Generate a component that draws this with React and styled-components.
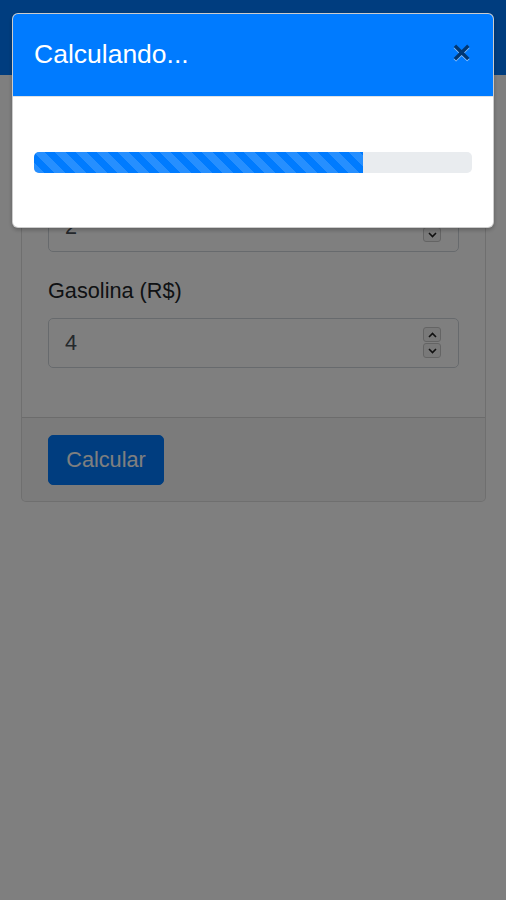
import React from "react";
import styled, { createGlobalStyle } from "styled-components";

const GlobalStyle = createGlobalStyle`
  html, body {
    margin: 0;
    padding: 0;
    background: #fff;
    min-height: 100%;
  }
  body {
    font-family: "Liberation Sans", Arial, sans-serif;
    font-size: 21.7px;
    line-height: 1.5;
    color: #212529;
  }
  * { box-sizing: border-box; }
`;

const Page = styled.div`
  min-height: 900px;
`;

const Navbar = styled.nav`
  height: 75px;
  background: #007bff;
`;

const Card = styled.div`
  margin: 56px 20px 0 21px;
  border: 1px solid rgba(0, 0, 0, 0.125);
  border-radius: 5px;
  background: #fff;
  overflow: hidden;
`;

const CardBody = styled.div`
  padding: 26px 26px 27px;
`;

const FormGroup = styled.div`
  margin-bottom: 22px;
`;

const Label = styled.label`
  display: block;
  margin-bottom: 11px;
  line-height: 33px;
`;

const InputWrap = styled.div`
  position: relative;
`;

const Input = styled.input`
  display: block;
  width: 100%;
  height: 50px;
  padding: 8px 16px;
  font: inherit;
  color: #495057;
  background: #fff;
  border: 1px solid #ced4da;
  border-radius: 5px;
  -moz-appearance: textfield;
  &::-webkit-inner-spin-button,
  &::-webkit-outer-spin-button {
    -webkit-appearance: none;
    margin: 0;
  }
`;

const Stepper = styled.div`
  position: absolute;
  right: 18px;
  top: 9px;
  width: 18px;
  display: flex;
  flex-direction: column;
  gap: 1px;
`;

const StepBtn = styled.div`
  height: 15px;
  border: 1px solid #c9c9c9;
  border-radius: 3px;
  background: #f2f2f2;
  display: flex;
  align-items: center;
  justify-content: center;
`;

const CardFooter = styled.div`
  padding: 17px 26px 16px;
  background: rgba(0, 0, 0, 0.03);
  border-top: 1px solid rgba(0, 0, 0, 0.125);
`;

const Button = styled.button`
  font: inherit;
  color: #fff;
  background: #007bff;
  border: 1px solid #007bff;
  border-radius: 5px;
  height: 50px;
  width: 116px;
  padding: 0;
`;

const Backdrop = styled.div`
  position: fixed;
  inset: 0;
  background: rgba(0, 0, 0, 0.5);
`;

const Modal = styled.div`
  position: fixed;
  top: 13px;
  left: 12px;
  right: 12px;
  background: #fff;
  border: 1px solid rgba(0, 0, 0, 0.2);
  border-radius: 6px;
  overflow: hidden;
  box-shadow: 0 2px 4px rgba(0, 0, 0, 0.25);
`;

const ModalHeader = styled.div`
  display: flex;
  align-items: center;
  justify-content: space-between;
  padding: 21px 21px 22px 21px;
  background: #007bff;
  color: #fff;
  border-bottom: 1px solid #dee2e6;
`;

const ModalTitle = styled.h5`
  margin: 0;
  font-size: 26.5px;
  font-weight: 500;
  line-height: 39px;
`;

const Close = styled.span`
  font-size: 32px;
  font-weight: 700;
  line-height: 1;
  color: #000;
  opacity: 0.55;
  text-shadow: 0 1px 0 #fff;
  margin-right: 1px;
  margin-top: -6px;
`;

const ModalBody = styled.div`
  padding: 55px 21px 54px;
`;

const Progress = styled.div`
  height: 21px;
  background: #e9ecef;
  border-radius: 5px;
  overflow: hidden;
  display: flex;
`;

const ProgressBar = styled.div`
  background-color: #007bff;
  background-image: linear-gradient(
    45deg,
    rgba(255, 255, 255, 0.15) 25%,
    transparent 25%,
    transparent 50%,
    rgba(255, 255, 255, 0.15) 50%,
    rgba(255, 255, 255, 0.15) 75%,
    transparent 75%,
    transparent
  );
  background-size: 21px 21px;
`;

const Chevron = ({ up }) => (
  <svg width="9" height="6" viewBox="0 0 9 6">
    <path
      d={up ? "M1 5 L4.5 1.5 L8 5" : "M1 1 L4.5 4.5 L8 1"}
      fill="none"
      stroke="#222"
      strokeWidth="1.6"
    />
  </svg>
);

const NumberField = ({ label, value }) => (
  <FormGroup>
    <Label>{label}</Label>
    <InputWrap>
      <Input type="number" defaultValue={value} />
      <Stepper>
        <StepBtn><Chevron up /></StepBtn>
        <StepBtn><Chevron /></StepBtn>
      </Stepper>
    </InputWrap>
  </FormGroup>
);

export default function App() {
  const progress = 75;
  return (
    <Page>
      <GlobalStyle />
      <Navbar />
      <Card>
        <CardBody>
          <NumberField label="Consumo (km/l)" value="2" />
          <NumberField label="Gasolina (R$)" value="4" />
        </CardBody>
        <CardFooter>
          <Button>Calcular</Button>
        </CardFooter>
      </Card>
      <Backdrop />
      <Modal>
        <ModalHeader>
          <ModalTitle>Calculando...</ModalTitle>
          <Close>×</Close>
        </ModalHeader>
        <ModalBody>
          <Progress>
            <ProgressBar style={{ width: `${progress}%` }} />
          </Progress>
        </ModalBody>
      </Modal>
    </Page>
  );
}
